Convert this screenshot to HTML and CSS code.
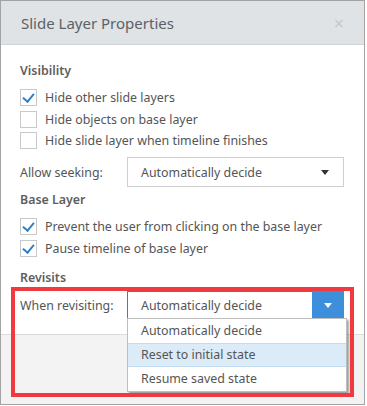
FILE: index.html
```html
<!DOCTYPE html>
<html lang="en">
<head>
    <meta charset="UTF-8">
    <title>Slide Layer Properties</title>
    <link rel="stylesheet" href="styles.css">
</head>
<body>
    <div class="dialog">
        <div class="dialog-header">
            <span class="dialog-title">Slide Layer Properties</span>
            <span class="close-btn">&times;</span>
        </div>

        <div class="dialog-body">
            <div class="section-title">Visibility</div>
            <div class="check-list">
                <label class="check-row"><span class="check-box checked"></span>Hide other slide layers</label>
                <label class="check-row"><span class="check-box"></span>Hide objects on base layer</label>
                <label class="check-row"><span class="check-box"></span>Hide slide layer when timeline finishes</label>
            </div>
            <div class="field-row seek-row">
                <span class="field-label">Allow seeking:</span>
                <div class="select-box">
                    <span>Automatically decide</span>
                    <span class="caret"></span>
                </div>
            </div>

            <div class="section-title base-title">Base Layer</div>
            <div class="check-list">
                <label class="check-row"><span class="check-box checked"></span>Prevent the user from clicking on the base layer</label>
                <label class="check-row"><span class="check-box checked"></span>Pause timeline of base layer</label>
            </div>

            <div class="section-title revisit-title">Revisits</div>
            <div class="field-row revisit-row">
                <span class="field-label">When revisiting:</span>
                <div class="select-box open">
                    <span>Automatically decide</span>
                    <span class="select-btn"><span class="caret white"></span></span>
                </div>
            </div>
        </div>

        <div class="dialog-footer"></div>

        <!-- open dropdown -->
        <ul class="dropdown-list">
            <li>Automatically decide</li>
            <li class="hover">Reset to initial state</li>
            <li>Resume saved state</li>
        </ul>

        <!-- annotation frame -->
        <div class="highlight-frame"></div>
    </div>
</body>
</html>
```

FILE: styles.css
```css
body {
    margin: 0;
    font-family: "Noto Sans", "Open Sans", sans-serif;
    font-size: 12.4px;
    color: #555;
    background: #fff;
}
.dialog {
    position: relative;
    width: 363px;
    height: 403px;
    border: 1px solid #a3a3a3;
    display: flex;
    flex-direction: column;
    background: #fff;
}
.dialog-header {
    height: 43px;
    flex: none;
    display: flex;
    align-items: center;
    justify-content: space-between;
    padding: 0 20px 0 20px;
    background-color: #dfe3e6;
    border-bottom: 1px solid #cfd4d8;
}
.dialog-title {
    font-size: 15px;
    color: #5b6166;
}
.close-btn {
    font-size: 18px;
    color: #c4c8cc;
}
.dialog-body {
    flex: none;
    height: 274px;
    padding: 16px 20px 0 19px;
    box-sizing: border-box;
}
.section-title {
    height: 20px;
    line-height: 20px;
    font-weight: 600;
    color: #5e5e5e;
}
.check-list {
    margin-top: 6px;
}
.check-row {
    display: flex;
    align-items: center;
    height: 21.5px;
}
.check-box {
    width: 15px;
    height: 15px;
    border: 1px solid #c9c9c9;
    background: #fff;
    margin-right: 8px;
    position: relative;
}
.check-box.checked::after {
    content: "";
    position: absolute;
    left: 4px;
    top: 1px;
    width: 5px;
    height: 9px;
    border: solid #2f80c6;
    border-width: 0 2px 2px 0;
    transform: rotate(40deg);
}
.field-row {
    display: flex;
    align-items: center;
}
.field-label {
    width: 107px;
    flex: none;
}
.seek-row {
    margin-top: 5.5px;
}
.select-box {
    width: 220px;
    height: 30px;
    box-sizing: border-box;
    border: 1px solid #cfcfcf;
    display: flex;
    align-items: center;
    justify-content: space-between;
    padding-left: 13px;
    padding-right: 14px;
    color: #555;
}
.caret {
    width: 0;
    height: 0;
    border-left: 4.5px solid transparent;
    border-right: 4.5px solid transparent;
    border-top: 5px solid #333;
}
.caret.white {
    border-top-color: #fff;
}
.base-title {
    margin-top: 3px;
}
.revisit-title {
    margin-top: 9px;
}
.revisit-row {
    margin-top: 3px;
}
.select-box.open {
    height: 28px;
    padding-right: 0;
    border-color: #3c7fc0;
}
.select-btn {
    width: 32px;
    height: 28px;
    margin-right: -1px;
    background-color: #3d8fdb;
    display: flex;
    align-items: center;
    justify-content: center;
}
.dialog-footer {
    flex: 1;
    margin-top: 15px;
    background-color: #f3f3f3;
    border-top: 1px solid #dcdcdc;
}
.dropdown-list {
    position: absolute;
    left: 126px;
    top: 317px;
    width: 218px;
    margin: 0;
    padding: 0;
    list-style: none;
    background: #fff;
    border: 1px solid #bdbdbd;
    box-shadow: 2px 2px 2px rgba(0, 0, 0, 0.35);
}
.dropdown-list li {
    height: 24px;
    line-height: 24px;
    padding-left: 13px;
    box-sizing: border-box;
}
.dropdown-list li.hover {
    background-color: #dcebf8;
    border-top: 1px solid #c4dcf2;
    border-bottom: 1px solid #c4dcf2;
    line-height: 22px;
}
.highlight-frame {
    position: absolute;
    left: 10px;
    top: 286px;
    width: 335px;
    height: 102px;
    border: 4px solid #ef3b3f;
}
```
